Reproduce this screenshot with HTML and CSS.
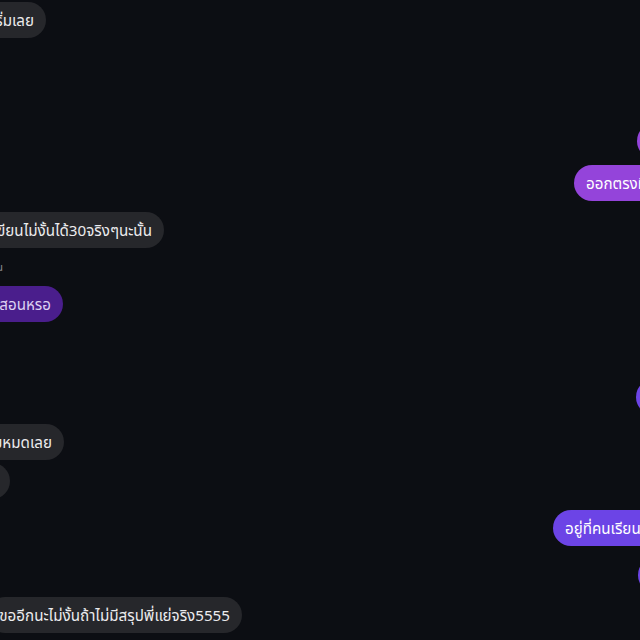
FILE: index.html
```html
<!DOCTYPE html>
<html lang="th">
<head>
<meta charset="utf-8">
<link rel="stylesheet" href="styles.css">
</head>
<body>
<main class="thread">
  <div class="row in e46 m-first"><div class="bubble gray">ก็เริ่มเลย</div></div>
  <div class="row out s637 m85"><div class="bubble violet">ใช่</div></div>
  <div class="row out s574 m6"><div class="bubble violet">ออกตรงที่เรียนไปแล้ว</div></div>
  <div class="row in e164 m11"><div class="bubble gray">ก็ต้องเขียนไม่งั้นได้30จริงๆนะนั้น</div></div>
  <div class="row in e3 m12"><div class="label">เมื่อวาน</div></div>
  <div class="row in e63 m12"><div class="bubble plum">ตอบกลับ: ที่สอนหรอ</div></div>
  <div class="row out s636 m57"><div class="bubble indigo">ได้</div></div>
  <div class="row in e64 m9"><div class="bubble gray">ลืมหมดเลย</div></div>
  <div class="row in e10 m3"><div class="bubble gray">ฮือ</div></div>
  <div class="row out s553 m11"><div class="bubble indigo">อยู่ที่คนเรียนด้วยนะ</div></div>
  <div class="row out s638 m11"><div class="bubble indigo">จ้า</div></div>
  <div class="row in e242 m4"><div class="bubble gray">ขออีกนะไม่งั้นถ้าไม่มีสรุปพี่แย่จริง5555</div></div>
</main>
</body>
</html>
```
FILE: styles.css
```css
html, body {
  margin: 0;
  padding: 0;
  background: #0c0e13;
  height: 100%;
  overflow: hidden;
}
body {
  font-family: "Noto Sans", "Noto Sans Thai", "Open Sans", sans-serif;
  font-size: 15.2px;
  color: #eeeef0;
}
.thread {
  display: flex;
  flex-direction: column;
  width: 640px;
}
.row {
  display: flex;
  flex-shrink: 0;
}
.row.in { justify-content: flex-end; }
.row.out { justify-content: flex-start; }
.bubble {
  flex-shrink: 0;
  white-space: nowrap;
  height: 36px;
  box-sizing: border-box;
  padding: 0 12px;
  line-height: 36px;
  border-radius: 18px;
}
.gray { background: #26272b; color: #ececee; }
.violet { background: #9444da; color: #fff; }
.plum { background: #4a1e8c; color: #ddd1f2; }
.indigo { background: #6c44e6; color: #fff; }
.label {
  flex-shrink: 0;
  white-space: nowrap;
  font-size: 11px;
  line-height: 14px;
  color: #8a8b90;
}

/* right edges of incoming bubbles */
.e3 { width: 3px; }
.e10 { width: 10px; }
.e46 { width: 46px; }
.e63 { width: 63px; }
.e64 { width: 64px; }
.e164 { width: 164px; }
.e242 { width: 242px; }

/* left edges of outgoing bubbles */
.s553 { padding-left: 553px; }
.s574 { padding-left: 574px; }
.s636 { padding-left: 636px; }
.s637 { padding-left: 637px; }
.s638 { padding-left: 638px; }

/* vertical spacing */
.m-first { margin-top: 2px; }
.m3 { margin-top: 3px; }
.m4 { margin-top: 4px; }
.m6 { margin-top: 6px; }
.m9 { margin-top: 9px; }
.m11 { margin-top: 11px; }
.m12 { margin-top: 12px; }
.m57 { margin-top: 57px; }
.m85 { margin-top: 85px; }
```
